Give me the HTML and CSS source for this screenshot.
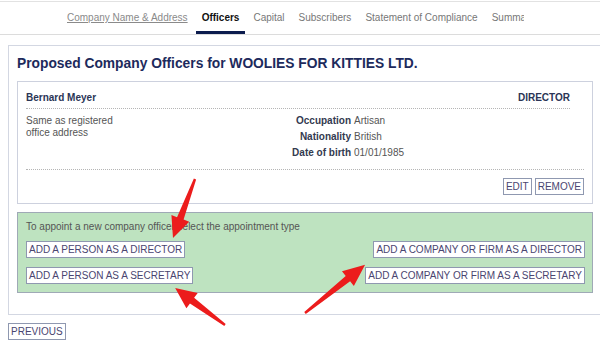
FILE: index.html
```html
<!DOCTYPE html>
<html lang="en">
<head>
    <meta charset="UTF-8">
    <meta name="viewport" content="width=device-width, initial-scale=1.0">
    <title>Proposed Company Officers</title>
    <link rel="stylesheet" href="styles.css">
</head>
<body>
    <nav class="steps">
        <div class="steps-inner">
            <a class="step done" href="#">Company Name &amp; Address</a>
            <a class="step active" href="#">Officers</a>
            <a class="step" href="#">Capital</a>
            <a class="step" href="#">Subscribers</a>
            <a class="step" href="#">Statement of Compliance</a>
            <a class="step" href="#">Summary</a>
        </div>
    </nav>

    <div class="page">
        <div class="panel">
            <h1>Proposed Company Officers for WOOLIES FOR KITTIES LTD.</h1>

            <div class="officer-card">
                <div class="officer-header">
                    <span class="officer-name">Bernard Meyer</span>
                    <span class="officer-role">DIRECTOR</span>
                </div>
                <div class="officer-body">
                    <div class="officer-address">Same as registered<br>office address</div>
                    <div class="officer-details">
                        <span class="label">Occupation</span><span class="value">Artisan</span>
                        <span class="label">Nationality</span><span class="value">British</span>
                        <span class="label">Date of birth</span><span class="value">01/01/1985</span>
                    </div>
                </div>
                <div class="officer-actions">
                    <button class="btn">EDIT</button>
                    <button class="btn">REMOVE</button>
                </div>
            </div>

            <div class="appoint-box">
                <div class="appoint-text">To appoint a new company officer select the appointment type</div>
                <div class="appoint-buttons">
                    <div class="appoint-col">
                        <button class="btn">ADD A PERSON AS A DIRECTOR</button>
                        <button class="btn">ADD A PERSON AS A SECRETARY</button>
                    </div>
                    <div class="appoint-col right">
                        <button class="btn">ADD A COMPANY OR FIRM AS A DIRECTOR</button>
                        <button class="btn">ADD A COMPANY OR FIRM AS A SECRETARY</button>
                    </div>
                </div>
            </div>
        </div>

        <div class="page-nav">
            <button class="btn">PREVIOUS</button>
        </div>
    </div>

    <!-- red callout arrows drawn over the page -->
    <svg class="arrows" width="600" height="354" viewBox="0 0 600 354">
        <g fill="#ec1c1c">
            <g transform="translate(195 179) rotate(110.45)">
                <polygon points="0,-1.2 42,-3.5 42,-9.5 63,0 42,9.5 42,3.5 0,1.2" />
            </g>
            <g transform="translate(225 325) rotate(-143.5)">
                <polygon points="0,-1.2 41,-3.5 41,-9.5 62,0 41,9.5 41,3.5 0,1.2" />
            </g>
            <g transform="translate(305 313) rotate(-38.7)">
                <polygon points="0,-1.2 55,-3.5 55,-9.5 77,0 55,9.5 55,3.5 0,1.2" />
            </g>
        </g>
    </svg>
</body>
</html>
```

FILE: styles.css
```css
html, body {
    overflow: hidden;
}
body {
    margin: 0;
    font-family: "Liberation Sans", Arial, sans-serif;
    font-size: 10px;
    color: #555;
    background: #fff;
    position: relative;
    height: 354px;
}
.steps {
    margin-top: 1px;
    padding-left: 60px;
    height: 32px;
    border-top: 1px solid #e2e2e2;
    border-bottom: 1px solid #dcdcdc;
}
.steps-inner {
    display: flex;
    width: 464px;
    overflow: hidden;
    white-space: nowrap;
}
.step {
    display: block;
    flex-shrink: 0;
    box-sizing: border-box;
    height: 32px;
    padding: 10px 6px 0;
    margin: 0 1px;
    line-height: 12px;
    font-size: 10px;
    color: #777;
    text-decoration: none;
    border-bottom: 3px solid transparent;
}
.step.done {
    color: #8a8a8a;
    text-decoration: underline;
}
.step.active {
    color: #111;
    font-weight: bold;
    border-bottom-color: #0c1c4e;
}
.page {
    padding: 10px 0 0 8px;
}
.panel {
    box-sizing: border-box;
    width: 594px;
    border: 1px solid #d3d7e2;
    padding: 10px 8px 21px;
}
h1 {
    margin: 0 0 9px;
    font-size: 13.8px;
    line-height: 16px;
    color: #1d2a5c;
}
.officer-card {
    border: 1px solid #cdd1de;
    padding: 10px 8px 8px;
}
.officer-header {
    display: flex;
    justify-content: space-between;
    margin-right: 14px;
    padding-bottom: 4px;
    border-bottom: 1px dotted #b5b5b5;
    line-height: 12px;
    font-weight: bold;
    color: #2b3556;
}
.officer-body {
    display: flex;
    padding: 4px 0 8px;
    border-bottom: 1px dotted #b5b5b5;
}
.officer-address {
    width: 245px;
    padding-top: 2px;
    line-height: 12px;
}
.officer-details {
    display: grid;
    grid-template-columns: 80px auto;
    column-gap: 3px;
    line-height: 16px;
}
.label {
    text-align: right;
    font-weight: bold;
    color: #333a50;
}
.officer-actions {
    display: flex;
    justify-content: flex-end;
    gap: 3px;
    margin-top: 8px;
}
.btn {
    font-family: "Liberation Sans", Arial, sans-serif;
    font-size: 10px;
    line-height: 15px;
    padding: 0 2px;
    margin: 0;
    border: 1px solid #8f98b0;
    border-radius: 0;
    background: #fff;
    color: #4a4570;
    cursor: pointer;
}
.appoint-box {
    margin-top: 8px;
    border: 1px solid #9fa9b6;
    background: #bee3c0;
    padding: 8px 7px 8px 8px;
}
.appoint-text {
    line-height: 12px;
}
.appoint-buttons {
    display: flex;
    justify-content: space-between;
    margin-top: 8px;
}
.appoint-col {
    display: flex;
    flex-direction: column;
    align-items: flex-start;
    gap: 9px;
}
.appoint-col.right {
    align-items: flex-end;
}
.page-nav {
    margin-top: 8px;
}
.arrows {
    position: absolute;
    left: 0;
    top: 0;
    pointer-events: none;
}
```
